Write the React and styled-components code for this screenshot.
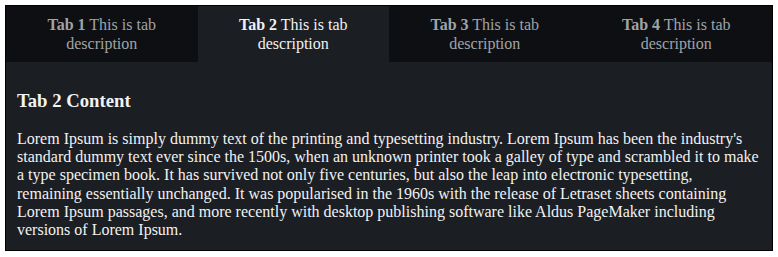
import React, { useState } from "react";
import styled, { createGlobalStyle } from "styled-components";

const tabs = [
  { id: 1, desc: "This is tab description" },
  { id: 2, desc: "This is tab description" },
  { id: 3, desc: "This is tab description" },
  { id: 4, desc: "This is tab description" },
];

const lorem =
  "Lorem Ipsum is simply dummy text of the printing and typesetting industry. Lorem Ipsum has been the industry's standard dummy text ever since the 1500s, when an unknown printer took a galley of type and scrambled it to make a type specimen book. It has survived not only five centuries, but also the leap into electronic typesetting, remaining essentially unchanged. It was popularised in the 1960s with the release of Letraset sheets containing Lorem Ipsum passages, and more recently with desktop publishing software like Aldus PageMaker including versions of Lorem Ipsum.";

const App = () => {
  const [active, setActive] = useState(2);

  return (
    <>
      <GlobalStyle />
      <Wrapper>
        <TabListX>
          {tabs.map((t) => (
            <TabX
              key={t.id}
              $active={t.id === active}
              onClick={() => setActive(t.id)}
            >
              <b>Tab {t.id}</b> {t.desc}
            </TabX>
          ))}
        </TabListX>
        <PanelX>
          <h3>Tab {active} Content</h3>
          <p>{lorem}</p>
        </PanelX>
      </Wrapper>
    </>
  );
};

const GlobalStyle = createGlobalStyle`
  body {
    margin: 5px;
    background: #fff;
    font-family: "Liberation Serif", "Times New Roman", serif;
  }
`;

const Wrapper = styled.div`
  border: 1px solid #000;
  background: #1b1e23;
`;

const TabListX = styled.div`
  display: flex;
  background: #0d0f12;
`;

const TabX = styled.button`
  flex: 1 1 0;
  padding: 9px 30px;
  border: none;
  background: ${(p) => (p.$active ? "#1b1e23" : "transparent")};
  color: ${(p) => (p.$active ? "#f2f2f2" : "#a0a4a8")};
  font-family: inherit;
  font-size: 16px;
  line-height: 19px;
  text-align: center;
  cursor: pointer;
`;

const PanelX = styled.div`
  padding: 10px 11px 11px;
  color: #f2f2f2;

  h3 {
    margin: 18px 0;
    font-size: 18.72px;
  }

  p {
    margin: 0;
    font-size: 16px;
    line-height: 18.2px;
  }
`;

export default App;
